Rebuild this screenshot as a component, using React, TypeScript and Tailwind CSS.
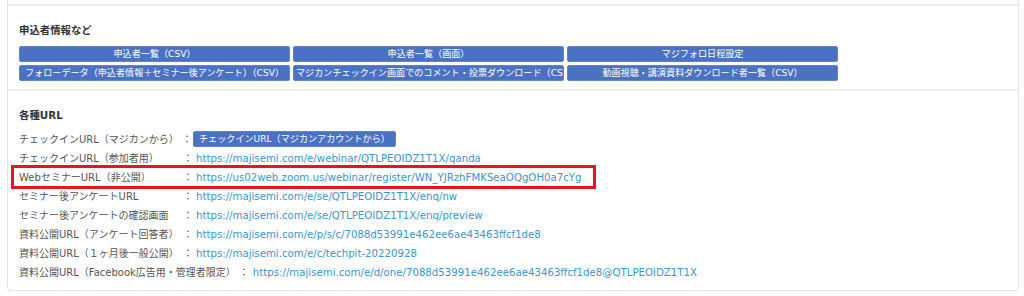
import React from "react";

const font = { fontFamily: '"DejaVu Sans", "Noto Sans CJK JP", sans-serif' };

const exportButtons = [
  "申込者一覧（CSV）",
  "申込者一覧（画面）",
  "マジフォロ日程設定",
  "フォローデータ（申込者情報＋セミナー後アンケート）（CSV）",
  "マジカンチェックイン画面でのコメント・投票ダウンロード（CSV）",
  "動画視聴・講演資料ダウンロード者一覧（CSV）",
];

const urlRows = [
  { label: "チェックインURL（参加者用）", url: "https://majisemi.com/e/webinar/QTLPEOIDZ1T1X/qanda" },
  { label: "WebセミナーURL（非公開）", url: "https://us02web.zoom.us/webinar/register/WN_YJRzhFMKSeaOQgOH0a7cYg" },
  { label: "セミナー後アンケートURL", url: "https://majisemi.com/e/se/QTLPEOIDZ1T1X/enq/nw" },
  { label: "セミナー後アンケートの確認画面", url: "https://majisemi.com/e/se/QTLPEOIDZ1T1X/enq/preview" },
  { label: "資料公開URL（アンケート回答者）", url: "https://majisemi.com/e/p/s/c/7088d53991e462ee6ae43463ffcf1de8" },
  { label: "資料公開URL（１ヶ月後一般公開）", url: "https://majisemi.com/e/c/techpit-20220928" },
];

export default function App() {
  return (
    <div className="w-[1024px] h-[296px] bg-white overflow-hidden text-[10px] text-[#555]" style={font}>
      <div className="ml-[7px] w-[1012px] h-[291px] border-x border-b border-[#e4e4e4] rounded-b-[4px] flex flex-col">
        <div className="h-[4px]" />
        <div className="h-[2px] bg-[#efefef]" />

        {/* 申込者情報 */}
        <section className="h-[83px] px-[11px] pt-[17px]">
          <h3 className="font-bold text-[#333] text-[10.4px] leading-[14px] mb-[9px]">申込者情報など</h3>
          <div className="grid grid-cols-[271px_271px_271px] gap-[3px]">
            {exportButtons.map((b) => (
              <div
                key={b}
                className="h-[16px] leading-[14px] rounded-[2px] bg-[#4b72c2] border border-[#6183c9] text-white text-[9.1px] text-center whitespace-nowrap overflow-hidden px-[2px]"
              >
                {b}
              </div>
            ))}
          </div>
        </section>

        <div className="h-[2px] bg-[#efefef]" />

        {/* 各種URL */}
        <section className="relative px-[11px] pt-[17px]">
          <h3 className="font-bold text-[#333] text-[10.4px] leading-[14px] mb-[7px]">各種URL</h3>
          <div className="flex items-center h-[20px]">
            <span className="min-w-[163px]">チェックインURL（マジカンから）</span>
            <span className="w-[10px]">：</span>
            <span className="ml-[1px] h-[16px] leading-[14px] px-[5px] rounded-[2px] bg-[#4b72c2] border border-[#6183c9] text-white text-[9.1px] whitespace-nowrap">
              チェックインURL（マジカンアカウントから）
            </span>
          </div>
          {urlRows.map((r) => (
            <div key={r.url} className="flex items-center h-[19px] whitespace-nowrap">
              <span className="min-w-[164px]">{r.label}</span>
              <span className="w-[10px]">：</span>
              <a className="ml-[3px] text-[10.2px] text-[#3a95d6]">{r.url}</a>
            </div>
          ))}
          <div className="flex items-center h-[19px] whitespace-nowrap">
            <span>資料公開URL（Facebook広告用・管理者限定）</span>
            <span className="ml-[3px] w-[10px]">：</span>
            <a className="ml-[4px] text-[10.2px] text-[#3a95d6]">
              https://majisemi.com/e/d/one/7088d53991e462ee6ae43463ffcf1de8@QTLPEOIDZ1T1X
            </a>
          </div>
          {/* highlight annotation */}
          <div className="absolute left-[3px] top-[74px] w-[585px] h-[24px] border-[3px] border-[#e8141e] pointer-events-none" />
        </section>
      </div>
    </div>
  );
}
